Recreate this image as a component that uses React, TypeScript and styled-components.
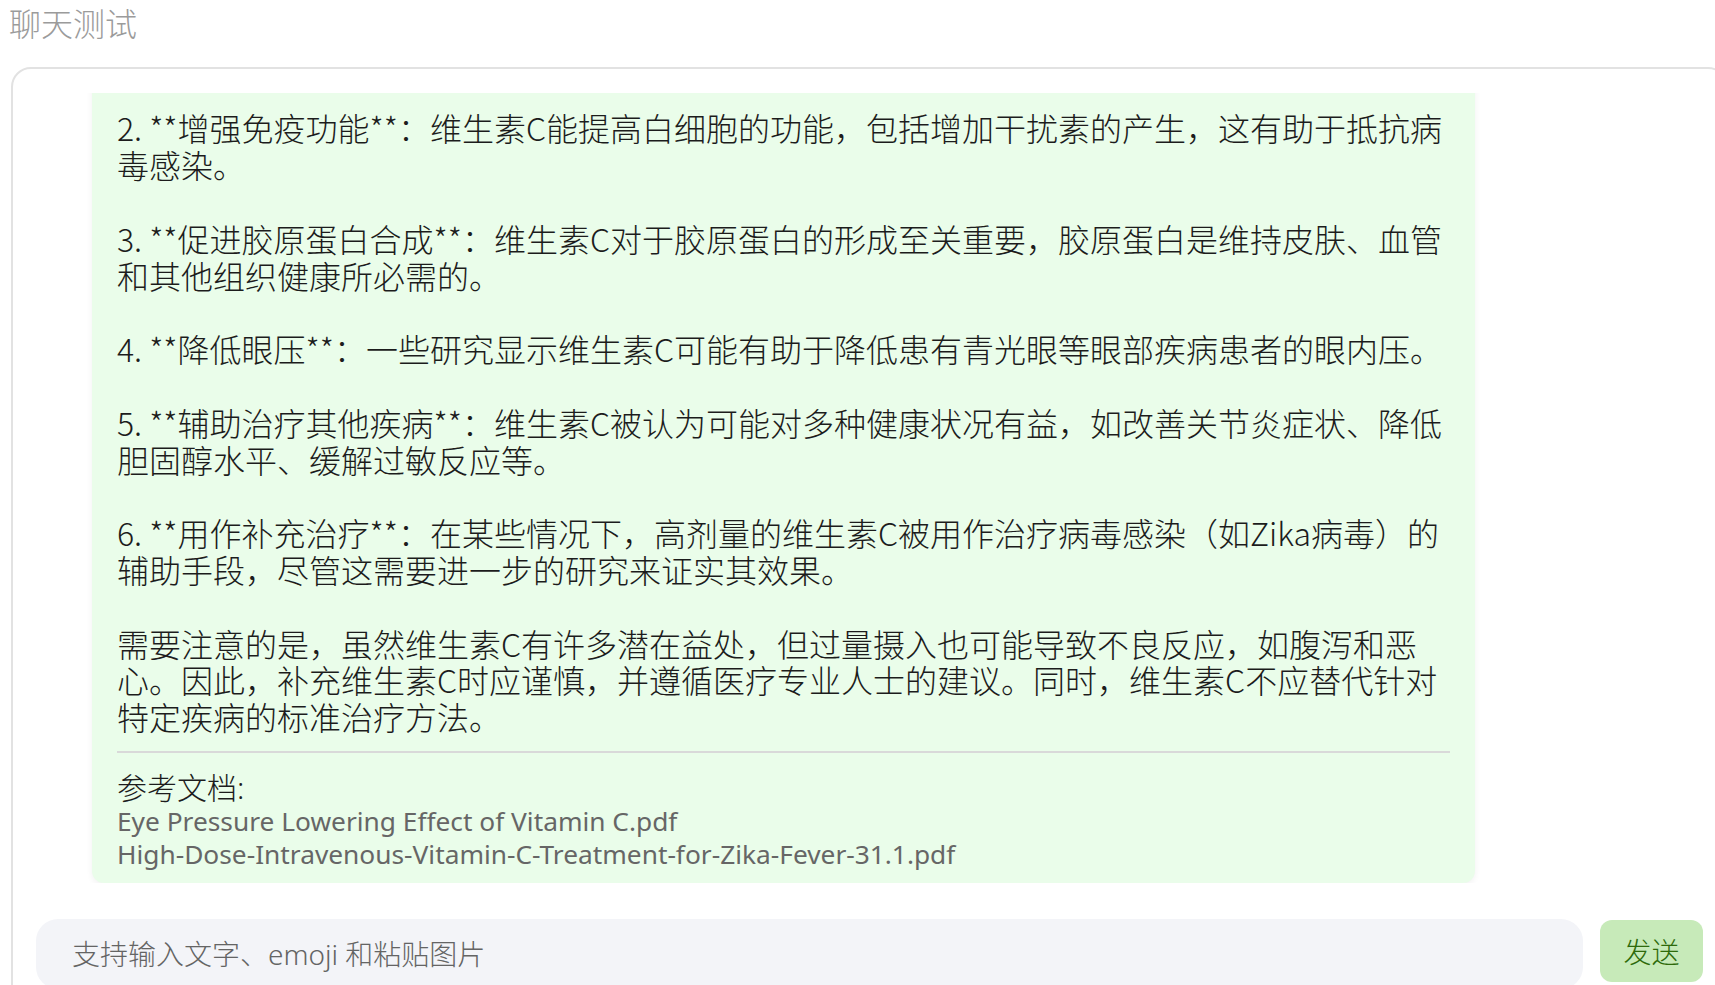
import React from "react";
import styled, { createGlobalStyle } from "styled-components";

const GlobalStyle = createGlobalStyle`
  html, body {
    margin: 0;
    padding: 0;
    height: 100%;
    overflow: hidden;
    background: #ffffff;
  }
  body {
    font-family: "Noto Sans", "Noto Sans CJK SC", sans-serif;
  }
`;

const Page = styled.div`
  padding-left: 11px;
`;

const Title = styled.div`
  margin-left: -2px;
  font-size: 32px;
  line-height: 48px;
  font-weight: 300;
  color: #9b9b9b;
`;

const ChatBox = styled.div`
  margin-top: 19px;
  width: 1717px;
  height: 940px;
  box-sizing: border-box;
  border: 2px solid #e2e2e2;
  border-radius: 20px;
  padding: 24px 23px 16px;
  display: flex;
  flex-direction: column;
  gap: 36px;
`;

const MessageList = styled.div`
  flex: 1;
  min-height: 0;
  overflow: hidden;
  display: flex;
  flex-direction: column;
  justify-content: flex-end;
`;

const Bubble = styled.div`
  margin-left: 56px;
  width: 1383px;
  box-sizing: border-box;
  padding: 36px 25px 12px;
  background: #eafdea;
  border-radius: 12px;
  box-shadow: 0 2px 6px rgba(0, 0, 0, 0.06);
  color: #1c1c1c;
  flex-shrink: 0;
`;

const Answer = styled.div`
  font-family: "Noto Sans CJK SC", sans-serif;
  font-size: 32px;
  font-weight: 300;
  line-height: 1.15;
  white-space: pre;
  margin-bottom: 1px;
`;

const Divider = styled.hr`
  margin: 16px 0 18px;
  border: none;
  height: 2px;
  background: #d9d9d9;
`;

const RefTitle = styled.div`
  font-size: 30px;
  font-weight: 300;
  line-height: 33px;
  margin-bottom: 1px;
`;

const RefItem = styled.div`
  font-size: 26.3px;
  line-height: 33px;
  color: #666666;
`;

const InputRow = styled.div`
  display: flex;
  align-items: flex-start;
  gap: 17px;
`;

const InputBox = styled.div`
  flex: 1;
  height: 70px;
  box-sizing: border-box;
  padding: 0 36px 2px;
  background: #f3f4f8;
  border-radius: 22px;
  display: flex;
  align-items: center;
  font-size: 28px;
  font-weight: 300;
  color: #646464;
`;

const SendButton = styled.button`
  margin-top: 1px;
  width: 103px;
  height: 62px;
  border: none;
  border-radius: 12px;
  background: #c7eab9;
  color: #2e6a0b;
  font-family: "Noto Sans", "Noto Sans CJK SC", sans-serif;
  font-size: 28px;
  font-weight: 300;
  padding: 0;
  cursor: pointer;
`;

const answer = `2. **增强免疫功能**：维生素C能提高白细胞的功能，包括增加干扰素的产生，这有助于抵抗病
毒感染。

3. **促进胶原蛋白合成**：维生素C对于胶原蛋白的形成至关重要，胶原蛋白是维持皮肤、血管
和其他组织健康所必需的。

4. **降低眼压**：一些研究显示维生素C可能有助于降低患有青光眼等眼部疾病患者的眼内压。

5. **辅助治疗其他疾病**：维生素C被认为可能对多种健康状况有益，如改善关节炎症状、降低
胆固醇水平、缓解过敏反应等。

6. **用作补充治疗**：在某些情况下，高剂量的维生素C被用作治疗病毒感染（如Zika病毒）的
辅助手段，尽管这需要进一步的研究来证实其效果。

需要注意的是，虽然维生素C有许多潜在益处，但过量摄入也可能导致不良反应，如腹泻和恶
心。因此，补充维生素C时应谨慎，并遵循医疗专业人士的建议。同时，维生素C不应替代针对
特定疾病的标准治疗方法。`;

const refs = [
  "Eye Pressure Lowering Effect of Vitamin C.pdf",
  "High-Dose-Intravenous-Vitamin-C-Treatment-for-Zika-Fever-31.1.pdf",
];

export default function App() {
  return (
    <Page>
      <GlobalStyle />
      <Title>聊天测试</Title>
      <ChatBox>
        <MessageList>
          <Bubble>
            <Answer>{answer}</Answer>
            <Divider />
            <RefTitle>参考文档:</RefTitle>
            {refs.map((r) => (
              <RefItem key={r}>{r}</RefItem>
            ))}
          </Bubble>
        </MessageList>
        <InputRow>
          <InputBox>支持输入文字、emoji 和粘贴图片</InputBox>
          <SendButton>发送</SendButton>
        </InputRow>
      </ChatBox>
    </Page>
  );
}
